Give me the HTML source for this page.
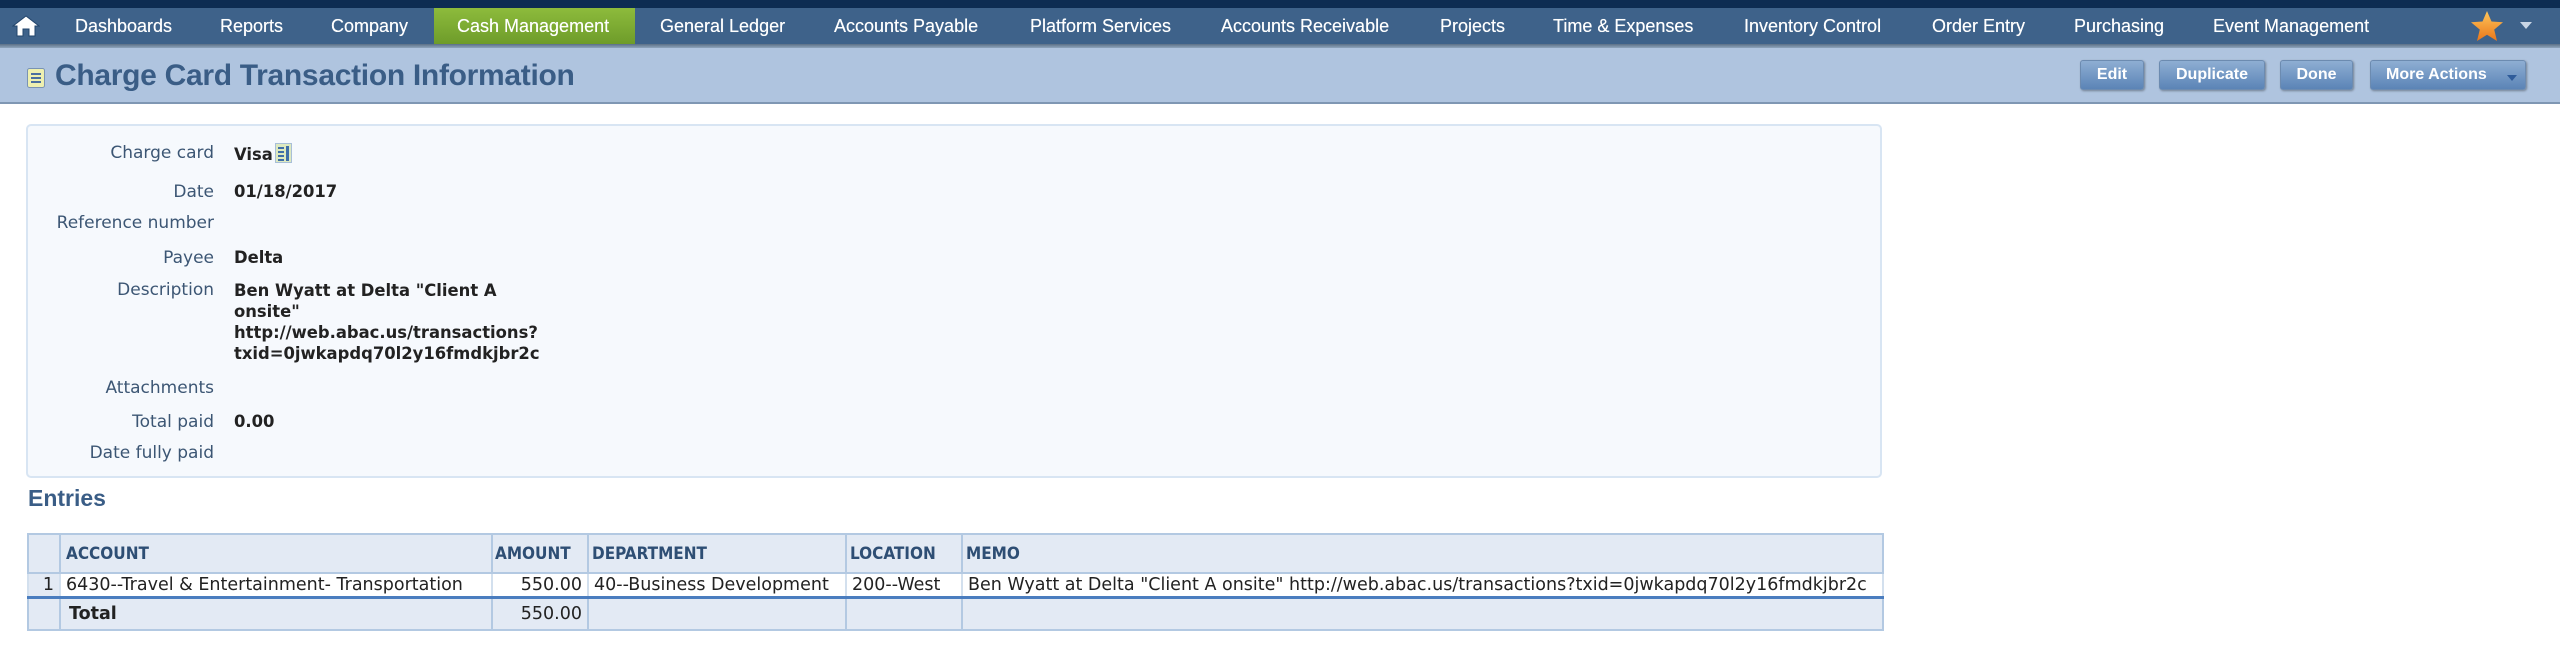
<!DOCTYPE html>
<html><head><meta charset="utf-8"><style>
*{margin:0;padding:0;box-sizing:border-box}
body{width:2560px;height:650px;background:#fff;position:relative;overflow:hidden;font-family:"Liberation Sans",sans-serif}
#top{position:absolute;left:0;top:0;width:2560px;height:8px;background:#0d2c52}
#nav{position:absolute;left:0;top:8px;width:2560px;height:36px;background:#3e628a}
#navsh{position:absolute;left:0;top:44px;width:2560px;height:4px;background:linear-gradient(#5a6f86,#8fa5bd)}
.ni{position:absolute;top:8px;height:36px;line-height:36px;color:#fff;font-size:18px;white-space:nowrap;text-shadow:0 0 0.4px #fff}
#green{position:absolute;left:434px;top:8px;width:201px;height:36px;background:linear-gradient(#8dbb3c,#6e9c2a)}
#sub{position:absolute;left:0;top:48px;width:2560px;height:56px;background:#afc4df;border-bottom:2px solid #7f97b3}
#title{position:absolute;left:55px;top:58px;font-size:30px;font-weight:bold;color:#3a5d86;white-space:nowrap;line-height:36px;letter-spacing:-0.3px}
.btn{position:absolute;top:60px;height:30px;line-height:28px;text-align:center;color:#fff;font-weight:bold;font-size:16px;border-radius:3px;background:linear-gradient(#8eaed3,#5b84b6);border:1px solid #6c8bb0;box-shadow:1px 1px 2px rgba(0,0,0,.35)}
#box{position:absolute;left:26px;top:124px;width:1856px;height:354px;background:#f6f9fd;border:2px solid #d8e5f3;border-radius:5px}
.lb{position:absolute;right:2346px;font-family:"DejaVu Sans",sans-serif;font-size:17px;color:#3c5674;white-space:nowrap;line-height:20px}
.vl{position:absolute;left:234px;font-family:"DejaVu Sans",sans-serif;font-size:16.4px;font-weight:bold;color:#222;white-space:nowrap;line-height:21px}
#entries{position:absolute;left:28px;top:485px;font-size:23px;font-weight:bold;color:#3a5d86}
table{position:absolute;left:27px;top:533px;border-collapse:collapse;font-family:"DejaVu Sans",sans-serif;font-size:17.5px;color:#222}
td{border:2px solid #b3c9e2;white-space:nowrap;padding:0 5px}
tr.h td{height:39px;background:#e3eaf4;color:#2e4e74;font-weight:bold;font-family:"DejaVu Sans Condensed","DejaVu Sans",sans-serif;font-size:17px;vertical-align:middle}
tr.d td{height:24px;background:#fff;border-color:#d3e0ee;border-bottom:3px solid #4a7dbf}
tr.t td{height:33px;background:#e3eaf4}
</style></head><body>
<div id="top"></div>
<div id="nav"></div>
<div id="navsh"></div>
<div id="green"></div>
<svg style="position:absolute;left:12px;top:15px" width="28" height="22" viewBox="0 0 28 22"><path d="M14 1 L27 11 L23 11 L23 21 L17 21 L17 14 L11 14 L11 21 L5 21 L5 11 L1 11 Z" fill="#fff" stroke="#23456c" stroke-width="1"/></svg>
<div class="ni" style="left:75px">Dashboards</div>
<div class="ni" style="left:220px">Reports</div>
<div class="ni" style="left:331px">Company</div>
<div class="ni" style="left:457px">Cash Management</div>
<div class="ni" style="left:660px">General Ledger</div>
<div class="ni" style="left:834px">Accounts Payable</div>
<div class="ni" style="left:1030px">Platform Services</div>
<div class="ni" style="left:1221px">Accounts Receivable</div>
<div class="ni" style="left:1440px">Projects</div>
<div class="ni" style="left:1553px">Time &amp; Expenses</div>
<div class="ni" style="left:1744px">Inventory Control</div>
<div class="ni" style="left:1932px">Order Entry</div>
<div class="ni" style="left:2074px">Purchasing</div>
<div class="ni" style="left:2213px">Event Management</div>
<svg style="position:absolute;left:2470px;top:10px" width="34" height="32" viewBox="0 0 34 32"><defs><linearGradient id="sg" x1="0" y1="0" x2="0" y2="1"><stop offset="0" stop-color="#ffc65a"/><stop offset="1" stop-color="#e9761a"/></linearGradient></defs><path d="M17 1 L21.5 11.5 L33 12.3 L24.2 19.6 L27 31 L17 24.8 L7 31 L9.8 19.6 L1 12.3 L12.5 11.5 Z" fill="url(#sg)"/></svg>
<svg style="position:absolute;left:2520px;top:22px" width="12" height="8"><path d="M0 0 L12 0 L6 7 Z" fill="#c9d6e6"/></svg>
<div id="sub"></div>
<svg style="position:absolute;left:27px;top:68px" width="18" height="20" viewBox="0 0 18 20"><rect x="0.5" y="0.5" width="17" height="19" rx="2" fill="#eef0b0" stroke="#7a93b3"/><path d="M4 6h10M4 10h10M4 14h10" stroke="#4a6fa0" stroke-width="2"/></svg>
<div id="title">Charge Card Transaction Information</div>
<div class="btn" style="left:2080px;width:64px">Edit</div>
<div class="btn" style="left:2159px;width:106px">Duplicate</div>
<div class="btn" style="left:2280px;width:73px">Done</div>
<div class="btn" style="left:2370px;width:156px;text-align:left;padding-left:15px">More Actions<svg style="position:absolute;right:8px;top:14px" width="10" height="7"><path d="M0 0h10L5 6z" fill="#2f5c9a"/></svg></div>
<div id="box"></div>
<div class="lb" style="top:143px">Charge card</div><div class="vl" style="top:143px">Visa<svg style="vertical-align:-3px;margin-left:2px" width="17" height="20" viewBox="0 0 17 20"><rect x="0.5" y="0.5" width="16" height="19" fill="#dde9c0" stroke="#a8bfd8"/><path d="M3 5h6M3 9h6M3 13h6M3 17h6" stroke="#3f6ea8" stroke-width="2"/><rect x="11" y="3" width="3" height="15" fill="#3f6ea8"/></svg></div>
<div class="lb" style="top:182px">Date</div><div class="vl" style="top:181px">01/18/2017</div>
<div class="lb" style="top:213px">Reference number</div>
<div class="lb" style="top:248px">Payee</div><div class="vl" style="top:247px">Delta</div>
<div class="lb" style="top:280px">Description</div>
<div class="vl" style="top:280px">Ben Wyatt at Delta "Client A<br>onsite"<br>http://web.abac.us/transactions?<br>txid=0jwkapdq70l2y16fmdkjbr2c</div>
<div class="lb" style="top:378px">Attachments</div>
<div class="lb" style="top:412px">Total paid</div><div class="vl" style="top:411px">0.00</div>
<div class="lb" style="top:443px">Date fully paid</div>
<div id="entries">Entries</div>
<table>
<tr class="h"><td style="width:32px"></td><td style="width:432px">ACCOUNT</td><td style="width:96px;padding:0 2px">AMOUNT</td><td style="width:258px;padding-left:3px">DEPARTMENT</td><td style="width:116px;padding-left:3px">LOCATION</td><td style="width:921px;padding-left:3px">MEMO</td></tr>
<tr class="d"><td style="text-align:right;background:#e3eaf4">1</td><td>6430--Travel &amp; Entertainment- Transportation</td><td style="text-align:right">550.00</td><td>40--Business Development</td><td>200--West</td><td>Ben Wyatt at Delta "Client A onsite" http://web.abac.us/transactions?txid=0jwkapdq70l2y16fmdkjbr2c</td></tr>
<tr class="t"><td></td><td style="font-weight:bold;padding-left:8px">Total</td><td style="text-align:right">550.00</td><td></td><td></td><td></td></tr>
</table>
</body></html>
